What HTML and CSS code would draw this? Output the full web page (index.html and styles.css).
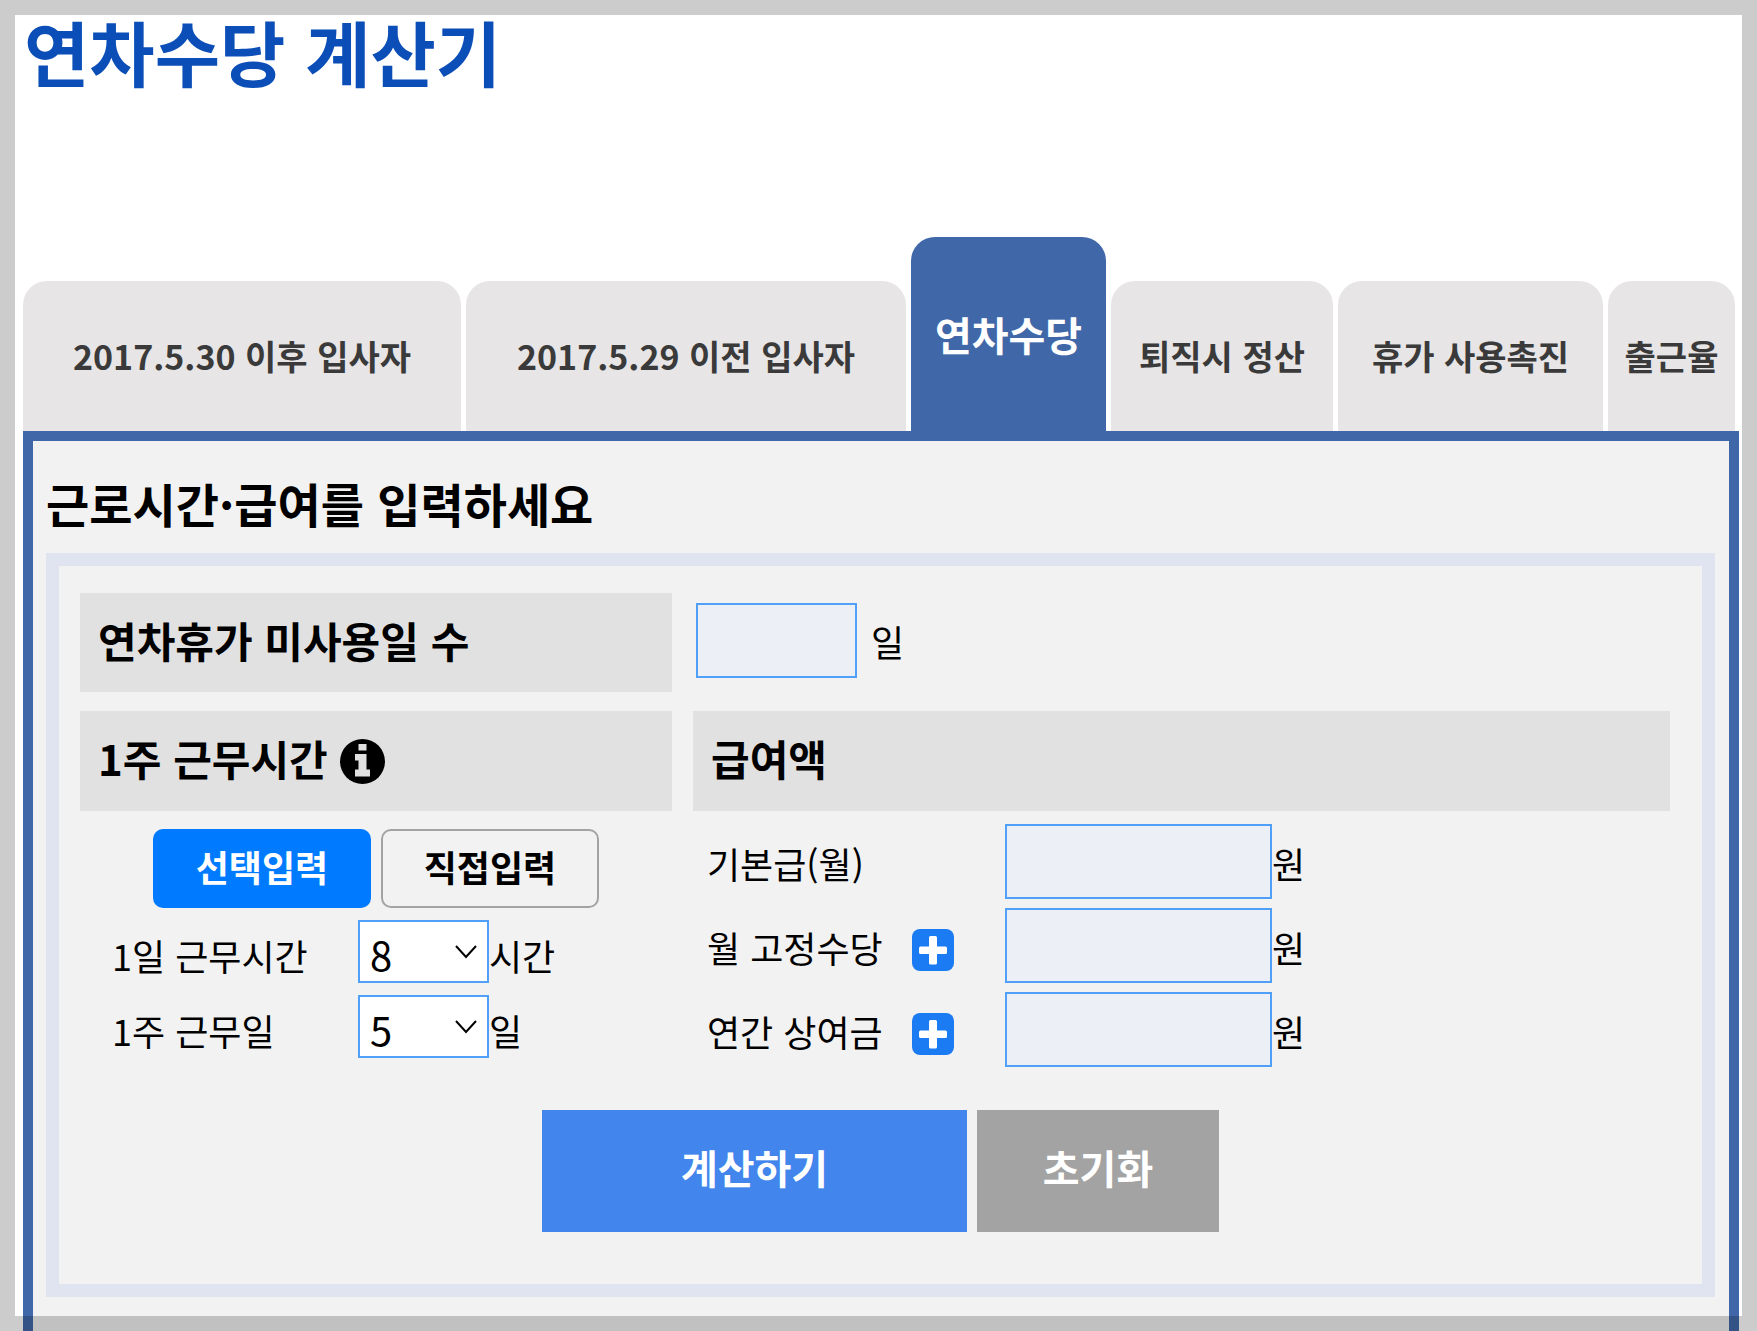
FILE: index.html
```html
<!DOCTYPE html>
<html lang="ko">
<head>
<meta charset="utf-8">
<meta name="viewport" content="width=device-width, initial-scale=1">
<title>연차수당 계산기</title>
<link rel="stylesheet" href="styles.css">
</head>
<body>
<main class="page">
  <h1 class="page-title">연차수당 계산기</h1>

  <nav class="tabs">
    <a class="tab" href="#after">2017.5.30 이후 입사자</a>
    <a class="tab" href="#before">2017.5.29 이전 입사자</a>
    <a class="tab tab-active" href="#allowance" aria-current="page">연차수당</a>
    <a class="tab" href="#retire">퇴직시 정산</a>
    <a class="tab" href="#promote">휴가 사용촉진</a>
    <a class="tab" href="#rate">출근율</a>
  </nav>

  <section class="panel">
    <h2 class="panel-title">근로시간·급여를 입력하세요</h2>
    <form class="form">
      <div class="form-grid">
        <label class="head" for="unused">연차휴가 미사용일 수</label>
        <div class="unused">
          <input class="field field-short" id="unused" type="text" inputmode="numeric">
          <span>일</span>
        </div>

        <div class="head">1주 근무시간
          <svg class="info" viewBox="0 0 45 45" aria-hidden="true">
            <circle cx="22.5" cy="22.5" r="22.5"/>
            <path fill="#e1e1e1" d="M18.500 5h8v6.500h-8zM15 15h11.500v15.500H30V37.500H15V30.500h3.500V21.500H15z"/>
          </svg>
        </div>
        <div class="head">급여액</div>

        <div class="hours">
          <div class="modes">
            <button class="mode mode-on" type="button">선택입력</button>
            <button class="mode" type="button">직접입력</button>
          </div>
          <div class="hours-row">
            <label class="hours-label" for="day-hours">1일 근무시간</label>
            <select class="select" id="day-hours"><option>8</option></select>
            <span>시간</span>
          </div>
          <div class="hours-row">
            <label class="hours-label" for="week-days">1주 근무일</label>
            <select class="select" id="week-days"><option>5</option></select>
            <span>일</span>
          </div>
        </div>

        <div class="pay">
          <div class="pay-row">
            <label class="pay-label" for="base">기본급(월)</label>
            <input class="field" id="base" type="text" inputmode="numeric">
            <span class="unit">원</span>
          </div>
          <div class="pay-row">
            <label class="pay-label" for="fixed">월 고정수당</label>
            <button class="add" type="button" aria-label="추가">
              <svg class="add-icon" viewBox="0 0 42 42" aria-hidden="true"><path d="M18.500 7h5q1.500 0 1.500 1.500v9h8.500q1.500 0 1.500 1.500v4.500q0 1.500-1.500 1.500H25v9q0 1.500-1.500 1.500h-5q-1.500 0-1.500-1.500v-9H8.500Q7 25 7 23.500V19q0-1.500 1.500-1.500H17v-9Q17 7 18.500 7z"/></svg>
            </button>
            <input class="field" id="fixed" type="text" inputmode="numeric">
            <span class="unit">원</span>
          </div>
          <div class="pay-row">
            <label class="pay-label" for="bonus">연간 상여금</label>
            <button class="add" type="button" aria-label="추가">
              <svg class="add-icon" viewBox="0 0 42 42" aria-hidden="true"><path d="M18.500 7h5q1.500 0 1.500 1.500v9h8.500q1.500 0 1.500 1.500v4.500q0 1.500-1.500 1.500H25v9q0 1.500-1.500 1.500h-5q-1.500 0-1.500-1.500v-9H8.500Q7 25 7 23.500V19q0-1.500 1.500-1.500H17v-9Q17 7 18.500 7z"/></svg>
            </button>
            <input class="field" id="bonus" type="text" inputmode="numeric">
            <span class="unit">원</span>
          </div>
        </div>
      </div>

      <div class="actions">
        <button class="action action-run" type="button">계산하기</button>
        <button class="action action-reset" type="reset">초기화</button>
      </div>
    </form>
  </section>
</main>
<div class="frame" aria-hidden="true"></div>
</body>
</html>
```
FILE: styles.css
```css
* {
  box-sizing: border-box;
}

body {
  margin: 0;
  background: #fff;
  color: #000;
  font-family: "Noto Sans CJK KR", "Noto Sans", sans-serif;
  font-size: 36px;
  line-height: 52px;
}

button,
input,
select {
  margin: 0;
  font-family: inherit;
  color: inherit;
}

.page {
  display: flex;
  flex-direction: column;
  min-height: 100vh;
  padding: 0 18px 0 23px;
}

/* translucent edge around the whole window */
.frame {
  position: fixed;
  inset: 0;
  border: 15px solid rgba(0, 0, 0, 0.2);
  pointer-events: none;
}

.page-title {
  margin: 0;
  padding: 0 0 137px 1px;
  color: #0b4eb8;
  font-size: 71px;
  line-height: 100px;
  font-weight: 700;
}

.tabs {
  display: grid;
  grid-template-columns: 438fr 440fr 195fr 222fr 265fr 127fr;
  align-items: end;
  gap: 5px;
  padding-right: 4px;
}

.tab {
  display: flex;
  align-items: center;
  justify-content: center;
  height: 150px;
  border-radius: 24px 24px 0 0;
  background: #e7e5e6;
  color: #3a3a3a;
  font-size: 34px;
  font-weight: 700;
  white-space: nowrap;
  text-decoration: none;
}

.tab-active {
  height: 194px;
  background: #4068a8;
  color: #fff;
  font-size: 40px;
}

.panel {
  flex: 1;
  padding: 28px 14px 34px 13px;
  border: 10px solid #4068a8;
  border-bottom: 0;
  background: #f2f2f2;
}

.panel-title {
  margin: 0 0 16px;
  font-size: 47px;
  line-height: 68px;
  font-weight: 700;
}

.form {
  padding: 27px 32px 52px 21px;
  border: 13px solid #e0e4f1;
}

.form-grid {
  display: grid;
  grid-template-columns: 592fr 977fr;
  grid-template-rows: 99px 100px auto;
  gap: 19px 21px;
}

.head {
  display: flex;
  align-items: center;
  gap: 12px;
  padding: 0 18px 6px;
  background: #e1e1e1;
  font-size: 42px;
  font-weight: 700;
}

.info {
  width: 45px;
  height: 45px;
  margin-top: 6px;
}

.unused {
  display: flex;
  align-items: center;
  gap: 14px;
  padding: 0 0 4px 3px;
}

.field {
  height: 75px;
  padding: 0 10px;
  border: 2px solid #509ff8;
  border-radius: 0;
  background: #ecf0f6;
  font-size: 36px;
}

.field-short {
  width: 161px;
}

.hours {
  display: flex;
  flex-direction: column;
  gap: 12px;
  margin-top: -1px;
}

.modes {
  display: flex;
  justify-content: center;
  gap: 10px;
}

.mode {
  width: 218px;
  height: 79px;
  padding: 0 0 6px;
  border: 2px solid #a3a3a3;
  border-radius: 10px;
  background: #f2f2f2;
  font-size: 36px;
  font-weight: 700;
}

.mode-on {
  border-color: #007bff;
  background: #007bff;
  color: #fff;
}

.hours-row {
  display: flex;
  align-items: baseline;
  padding-left: 32px;
}

.hours-label {
  width: 246px;
}

.select {
  width: 131px;
  height: 63px;
  padding: 4px 10px 0;
  border: 2px solid #509ff8;
  border-radius: 0;
  background: #fff url("data:image/svg+xml,%3Csvg xmlns='http://www.w3.org/2000/svg' width='22' height='14'%3E%3Cpath d='M1 1l10 11L21 1' fill='none' stroke='%23000' stroke-width='2'/%3E%3C/svg%3E") no-repeat right 10px top 23px;
  font-size: 40px;
  line-height: 52px;
  appearance: none;
}

.pay {
  display: flex;
  flex-direction: column;
  gap: 9px;
  margin-top: -6px;
}

.pay-row {
  display: grid;
  grid-template-columns: 205px 93px 267px auto;
  justify-content: start;
  align-items: center;
  padding-left: 14px;
}

.pay-row .field {
  grid-column: 3;
  width: 100%;
}

.pay-label,
.unit {
  padding-top: 2px;
}

.add {
  width: 42px;
  height: 42px;
  margin-top: 8px;
  padding: 0;
  border: 0;
  border-radius: 8px;
  background: #1b7bf2;
}

.add-icon {
  display: block;
  fill: #fff;
}

.actions {
  display: flex;
  justify-content: center;
  gap: 10px;
  margin: 43px -11px 0 0;
}

.action {
  width: 425px;
  height: 122px;
  padding: 0 0 8px;
  border: 0;
  background: #4285ec;
  color: #fff;
  font-size: 40px;
  font-weight: 700;
}

.action-reset {
  width: 242px;
  background: #a3a3a3;
}
```
